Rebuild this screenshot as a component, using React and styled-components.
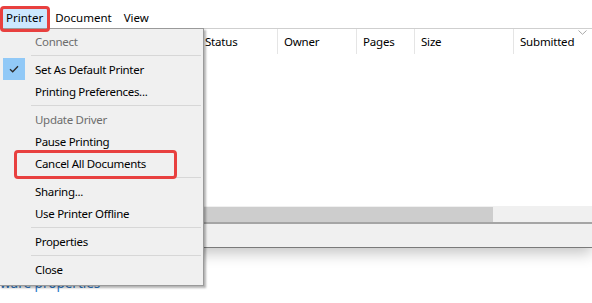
import React from 'react'
import styled, { createGlobalStyle } from 'styled-components'

const GlobalStyle = createGlobalStyle`
  html, body {
    margin: 0;
    padding: 0;
    background: #ffffff;
    overflow: hidden;
  }
  body {
    font-family: "Noto Sans", "Open Sans", sans-serif;
    color: #000;
  }
`

const menuItems = [
  { label: 'Connect', disabled: true },
  { sep: true },
  { label: 'Set As Default Printer', checked: true },
  { label: 'Printing Preferences...' },
  { sep: true },
  { label: 'Update Driver', disabled: true },
  { label: 'Pause Printing' },
  { label: 'Cancel All Documents', marked: true },
  { sep: true },
  { label: 'Sharing...' },
  { label: 'Use Printer Offline' },
  { sep: true },
  { label: 'Properties' },
  { sep: true },
  { label: 'Close' },
]

const columns = [
  { label: '', width: 199 },
  { label: 'Status', width: 79 },
  { label: 'Owner', width: 79 },
  { label: 'Pages', width: 58 },
  { label: 'Size', width: 99 },
  { label: 'Submitted', width: 120, sort: true },
]

const CheckIcon = () => (
  <svg width="10" height="8" viewBox="0 0 10 8">
    <path d="M1 4.2 L3.7 6.8 L9 1.2" fill="none" stroke="#2b2b2b" strokeWidth="1.3" />
  </svg>
)

const SortChevron = () => (
  <svg width="9" height="5" viewBox="0 0 9 5">
    <path d="M0.5 0.5 L4.5 4.3 L8.5 0.5" fill="none" stroke="#a8a8a8" strokeWidth="1" />
  </svg>
)

export default function App() {
  return (
    <Page>
      <GlobalStyle />
      <Window>
        <MenuBar>
          <MenuTitle active>Printer</MenuTitle>
          <MenuTitle>Document</MenuTitle>
          <MenuTitle>View</MenuTitle>
        </MenuBar>
        <ListView>
          <Header>
            {columns.map((c, i) => (
              <HeaderCell key={i} style={{ width: c.width }}>
                {c.label}
                {c.sort && (
                  <SortMark>
                    <SortChevron />
                  </SortMark>
                )}
              </HeaderCell>
            ))}
          </Header>
          <ListBody />
          <HScroll>
            <Thumb />
          </HScroll>
        </ListView>
        <StatusBar />
      </Window>
      <Below>
        <SettingsLink>ware properties</SettingsLink>
      </Below>

      <Dropdown>
        {menuItems.map((m, i) =>
          m.sep ? (
            <Separator key={i} />
          ) : (
            <Item key={i} disabled={m.disabled}>
              <Gutter>
                {m.checked && (
                  <CheckBox>
                    <CheckIcon />
                  </CheckBox>
                )}
              </Gutter>
              {m.label}
              {m.marked && <Callout />}
            </Item>
          )
        )}
      </Dropdown>
      <TitleCallout />
    </Page>
  )
}

const Page = styled.div`
  position: relative;
  width: 592px;
  height: 303px;
  overflow: hidden;
  background: #fff;
`

const Window = styled.div`
  height: 247px;
  display: flex;
  flex-direction: column;
  background: #fff;
  border-bottom: 1px solid #7a7a7a;
  box-shadow: 0 5px 14px rgba(0, 0, 0, 0.24);
  position: relative;
`

const MenuBar = styled.div`
  height: 29px;
  display: flex;
  align-items: flex-end;
  padding-left: 3px;
  box-sizing: border-box;
  border-bottom: 1px solid #cfcfcf;
`

const MenuTitle = styled.div`
  font-size: 11.5px;
  height: 20px;
  line-height: 19px;
  padding: 0 4px 0 3px;
  margin-right: 5px;
  background: ${p => (p.active ? '#cce8ff' : 'transparent')};
`

const ListView = styled.div`
  flex: 1;
  display: flex;
  flex-direction: column;
`

const Header = styled.div`
  height: 25px;
  display: flex;
`

const HeaderCell = styled.div`
  position: relative;
  box-sizing: border-box;
  font-size: 11.5px;
  letter-spacing: -0.2px;
  line-height: 25px;
  padding-left: 6px;
  border-right: 1px solid #e5e5e5;
  flex-shrink: 0;
  &:last-child {
    border-right: none;
  }
`

const SortMark = styled.span`
  position: absolute;
  top: 1px;
  left: 64px;
  line-height: 0;
`

const ListBody = styled.div`
  flex: 1;
`

const HScroll = styled.div`
  height: 16px;
  background: #f0f0f0;
  display: flex;
  align-items: center;
  border-bottom: 2px solid #a5a5a5;
`

const Thumb = styled.div`
  width: 493px;
  height: 15px;
  background: #cdcdcd;
`

const StatusBar = styled.div`
  height: 23px;
  background: #f0f0f0;
`

const Below = styled.div`
  padding: 26px 0 0 0;
`

const SettingsLink = styled.div`
  font-size: 13.5px;
  color: #2a78c8;
  line-height: 18px;
`

const Dropdown = styled.div`
  position: absolute;
  left: -1px;
  top: 28px;
  width: 203px;
  padding: 1px 0 5px 0;
  background: #f0f0f0;
  border: 1px solid #9a9a9a;
  box-shadow: 2px 2px 2px rgba(0, 0, 0, 0.3);
`

const Item = styled.div`
  position: relative;
  height: 22px;
  display: flex;
  align-items: center;
  font-size: 11.5px;
  letter-spacing: -0.3px;
  color: ${p => (p.disabled ? '#6d6d6d' : '#000')};
`

const Gutter = styled.div`
  width: 35px;
  height: 22px;
  flex-shrink: 0;
  display: flex;
  align-items: center;
`

const CheckBox = styled.div`
  margin-left: 3px;
  width: 22px;
  height: 22px;
  background: #91c9f7;
  display: flex;
  align-items: center;
  justify-content: center;
`

const Separator = styled.div`
  height: 1px;
  margin: 3px 2px 2px 31px;
  background: #d7d7d7;
`

const Callout = styled.div`
  position: absolute;
  left: 14px;
  top: -2px;
  width: 163px;
  height: 29px;
  box-sizing: border-box;
  border: 3px solid #e8403f;
  border-radius: 4px;
`

const TitleCallout = styled.div`
  position: absolute;
  left: 0;
  top: 6px;
  width: 50px;
  height: 26px;
  box-sizing: border-box;
  border: 3px solid #e8403f;
  border-radius: 4px;
`
